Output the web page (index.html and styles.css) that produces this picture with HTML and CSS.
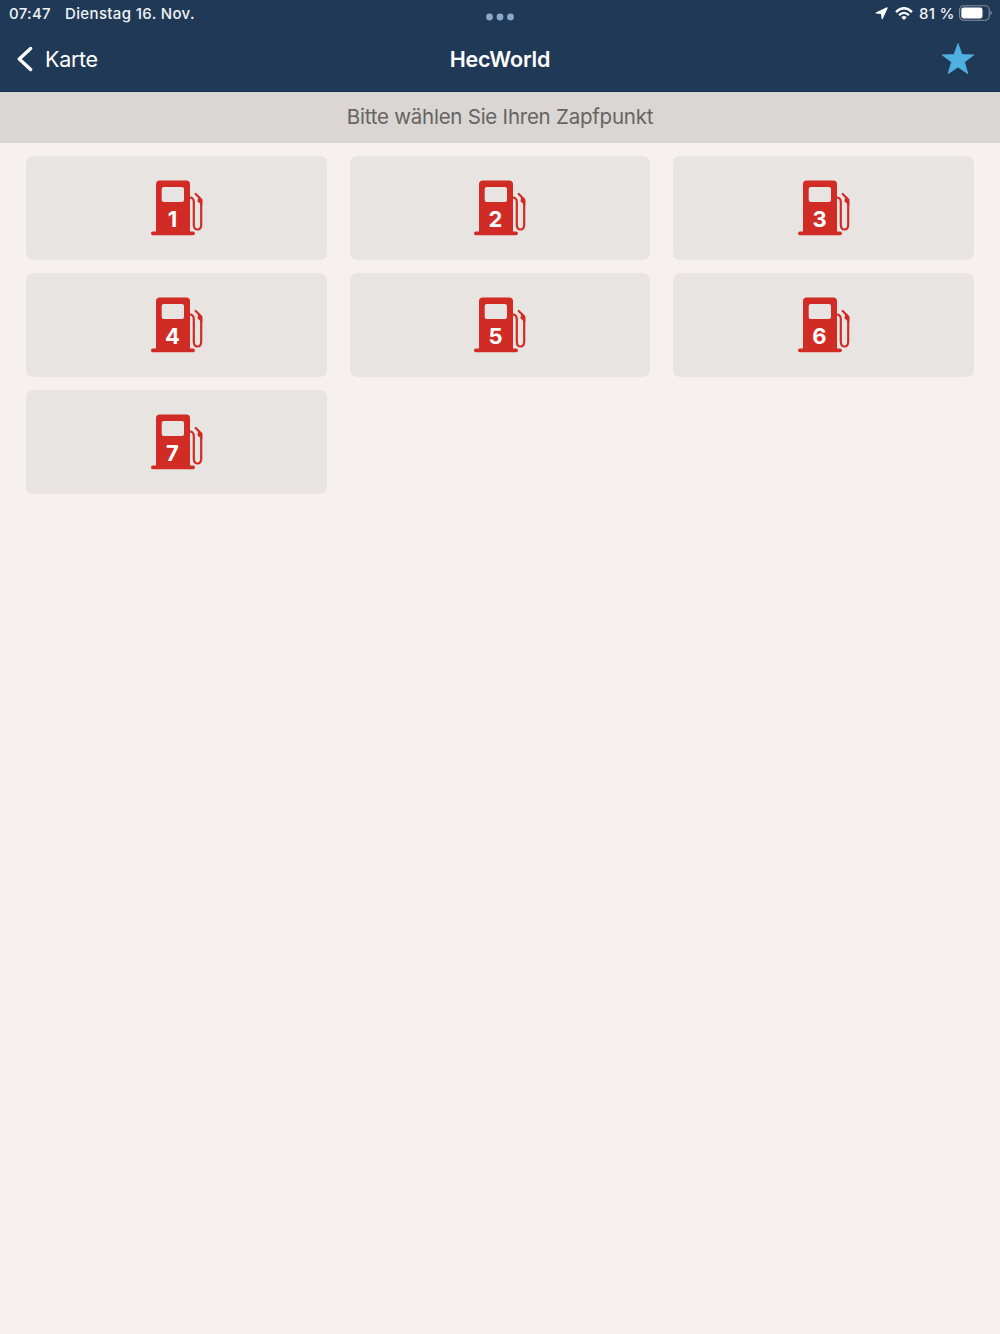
FILE: index.html
```html
<!DOCTYPE html>
<html lang="de">
<head>
<meta charset="utf-8">
<title>HecWorld</title>
<link rel="stylesheet" href="styles.css">
</head>
<body>
<svg class="defs" aria-hidden="true">
  <symbol id="pump" viewBox="0 0 53 56">
    <path fill="currentColor" fill-rule="evenodd" d="M6 51.5V4.2Q6 .5 9.7 .5H36.300Q40 .5 40 4.200V51.500H43Q45 51.500 45 53.500Q45 55.300 43 55.300H2.800Q1 55.300 1 53.500Q1 51.500 2.800 51.500ZM13.800 7Q11.700 7 11.700 9.100V19.900Q11.700 22 13.800 22H31.900Q34 22 34 19.900V9.100Q34 7 31.900 7Z"/>
    <path fill="none" stroke="currentColor" stroke-width="2.200" stroke-linecap="round" stroke-linejoin="round" d="M39.500 17.500Q43.800 17.500 43.800 22V44.500Q43.800 49.500 47.500 49.500Q51.200 49.500 51.200 44.500V19.500L45.700 14"/>
    <path fill="currentColor" d="M48.200 16.500L52.300 20V25.500L47.500 21.500Z"/>
  </symbol>
</svg>
<header class="header">
  <div class="status">
    <span class="time">07:47</span><span class="date">Dienstag 16. Nov.</span>
    <svg class="dots" width="28" height="8" viewBox="0 0 28 8"><circle cx="3.500" cy="4" r="3.400"/><circle cx="14" cy="4" r="3.400"/><circle cx="24.500" cy="4" r="3.400"/></svg>
    <div class="indicators">
      <svg width="13" height="13" viewBox="0 0 13 13"><path fill="#fff" stroke="#fff" stroke-width="1.200" stroke-linejoin="round" d="M12.100 .9L7.200 11.600L6.600 6.500L1.200 6Z"/></svg>
      <svg class="wifi" width="18" height="13" viewBox="0 0 18 13"><g fill="none" stroke="#fff" stroke-width="2.300"><path d="M1 5.100Q9 -2.500 17 5.100"/><path d="M4 8.200Q9 3.600 14 8.200"/></g><path fill="#fff" d="M6.300 10.200Q9 8 11.700 10.200L9 12.900Z"/></svg>
      <span class="percent">81 %</span>
      <svg class="battery" width="34" height="16" viewBox="0 0 34 16"><rect x=".6" y=".8" width="29.600" height="14.400" rx="4" fill="none" stroke="#8591a1" stroke-width="1.100"/><rect x="2.300" y="2.600" width="21.200" height="10.800" rx="2.300" fill="#fff"/><path d="M31.500 5.600Q34.300 8 31.500 10.400Z" fill="#8591a1"/></svg>
    </div>
  </div>
  <nav class="nav">
    <a class="back"><svg width="17" height="26" viewBox="0 0 17 26"><path d="M14.600 2.500L3.300 13L14.600 23.500" fill="none" stroke="#fff" stroke-width="3.400" stroke-linecap="round" stroke-linejoin="round"/></svg><span>Karte</span></a>
    <h1>HecWorld</h1>
    <svg class="star" width="34" height="34" viewBox="0 0 34 34"><path d="M17 1.500L21 12.600L32.800 12.900L23.500 20.100L26.900 31.800L17 25L7.100 31.800L10.500 20.100L1.200 12.900L13 12.600Z" fill="#4fb0e2" stroke="#4fb0e2" stroke-width=".8" stroke-linejoin="round"/></svg>
  </nav>
</header>
<div class="prompt"><span>Bitte wählen Sie Ihren Zapfpunkt</span></div>
<main class="grid">
  <button class="card"><svg class="pump"><use href="#pump"/><text x="22.500" y="46.500">1</text></svg></button>
  <button class="card"><svg class="pump"><use href="#pump"/><text x="22.500" y="46.500">2</text></svg></button>
  <button class="card"><svg class="pump"><use href="#pump"/><text x="22.500" y="46.500">3</text></svg></button>
  <button class="card"><svg class="pump"><use href="#pump"/><text x="22.500" y="46.500">4</text></svg></button>
  <button class="card"><svg class="pump"><use href="#pump"/><text x="22.500" y="46.500">5</text></svg></button>
  <button class="card"><svg class="pump"><use href="#pump"/><text x="22.500" y="46.500">6</text></svg></button>
  <button class="card"><svg class="pump"><use href="#pump"/><text x="22.500" y="46.500">7</text></svg></button>
</main>
</body>
</html>
```
FILE: styles.css
```css
* { box-sizing: border-box; }
body {
  margin: 0;
  min-height: 1334px;
  background: #f6f1ee;
  font-family: Inter, "Liberation Sans", sans-serif;
}
.defs { display: none; }
svg { display: block; flex: none; }
.header {
  height: 92px;
  background: #203956;
  border-bottom: 1px solid #16304f;
  color: #fff;
}
.status {
  height: 26px;
  display: grid;
  grid-template-columns: 56px 421px 28px 1fr;
  grid-template-rows: 26px;
  align-items: center;
  padding: 0 7px 0 9px;
  font-size: 15px;
  font-weight: 500;
  line-height: 25px;
  color: #f0f3f6;
}
.time { letter-spacing: .3px; }
.date { letter-spacing: .36px; }
.time, .date, .percent { padding-top: 1px; }
.dots { fill: #8da8cb; margin-top: 7px; }
.indicators { display: flex; align-items: center; justify-content: flex-end; }
.wifi { margin: 0 6px 0 7px; }
.percent { width: 40px; white-space: nowrap; letter-spacing: .3px; }
.nav {
  height: 65px;
  display: grid;
  grid-template-columns: 1fr auto 1fr;
  align-items: center;
  padding: 0 25px 0 16px;
}
.back { display: flex; align-items: center; gap: 12px; font-size: 21.5px; letter-spacing: -.3px; }
h1 { margin: 0 0 0 9px; font-size: 21.5px; font-weight: 600; letter-spacing: -.2px; }
.star { justify-self: end; }
.prompt {
  height: 51px;
  display: flex;
  align-items: center;
  justify-content: center;
  padding-bottom: 2px;
  background: #dad6d3;
  color: #666462;
  font-size: 20.5px;
  letter-spacing: -.24px;
}
.grid {
  display: grid;
  grid-template-columns: repeat(3, 1fr);
  grid-auto-rows: 104px;
  gap: 13.2px 23px;
  padding: 13px 26px;
}
.card {
  display: flex;
  align-items: center;
  justify-content: center;
  border: 0;
  border-radius: 7px;
  padding: 0;
  background: #e8e4e1;
}
.pump { width: 53px; height: 56px; color: #d12b26; }
.pump text {
  fill: #fff;
  font: 700 22px Inter, "Liberation Sans", sans-serif;
  text-anchor: middle;
}
```
